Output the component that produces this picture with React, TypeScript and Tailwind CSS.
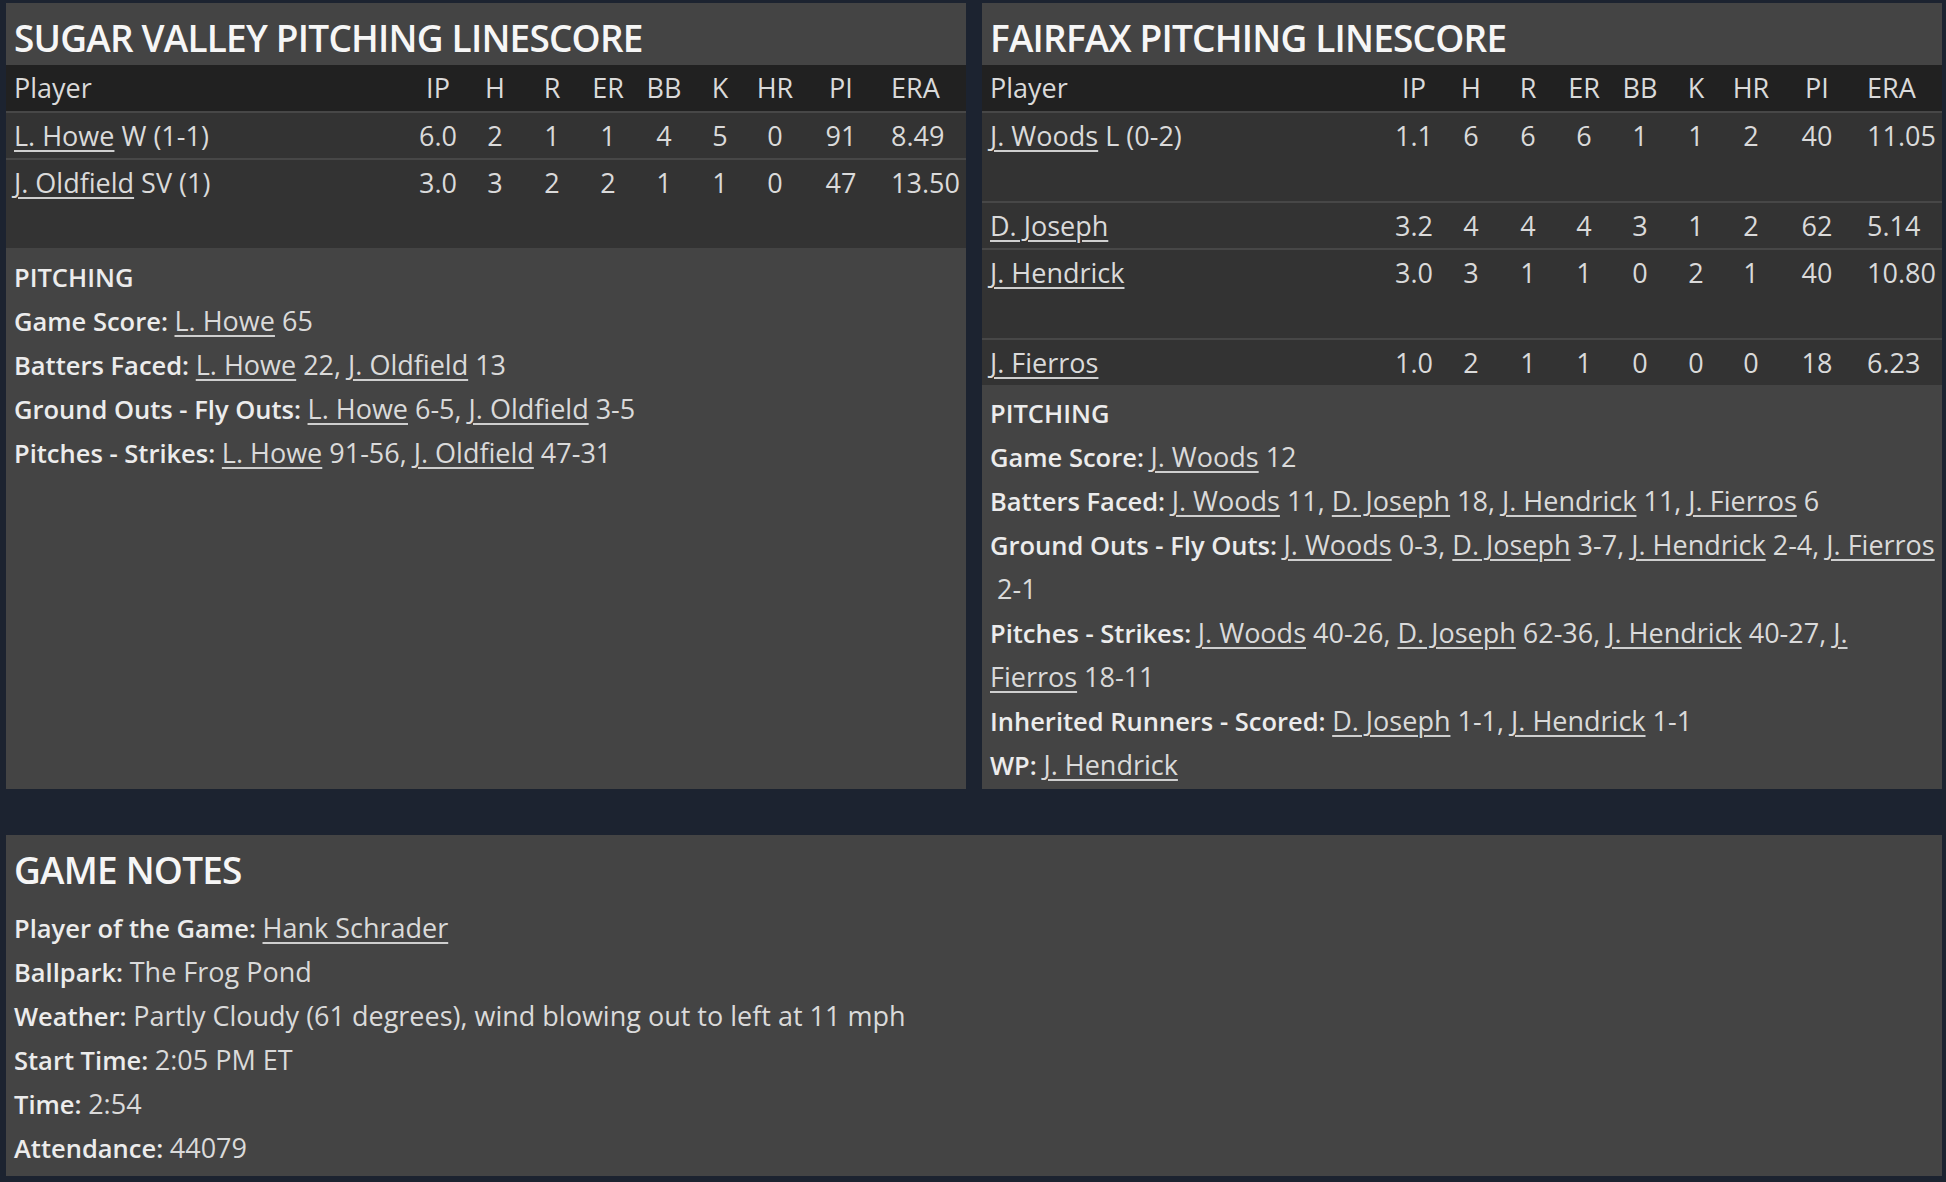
import React from "react";

type Row = {
  name: string;
  note?: string;
  stats: string[];
  tall?: boolean;
};

const cols = ["IP", "H", "R", "ER", "BB", "K", "HR", "PI", "ERA"];

const sugarValley: Row[] = [
  { name: "L. Howe", note: "W (1-1)", stats: ["6.0", "2", "1", "1", "4", "5", "0", "91", "8.49"] },
  { name: "J. Oldfield", note: "SV (1)", stats: ["3.0", "3", "2", "2", "1", "1", "0", "47", "13.50"], tall: true },
];

const fairfax: Row[] = [
  { name: "J. Woods", note: "L (0-2)", stats: ["1.1", "6", "6", "6", "1", "1", "2", "40", "11.05"], tall: true },
  { name: "D. Joseph", stats: ["3.2", "4", "4", "4", "3", "1", "2", "62", "5.14"] },
  { name: "J. Hendrick", stats: ["3.0", "3", "1", "1", "0", "2", "1", "40", "10.80"], tall: true },
  { name: "J. Fierros", stats: ["1.0", "2", "1", "1", "0", "0", "0", "18", "6.23"] },
];

const gridCols =
  "grid grid-cols-[404px_56px_58px_56px_56px_56px_56px_54px_78px_86px]";

const L = ({ children }: { children: React.ReactNode }) => (
  <span className="underline decoration-2 underline-offset-[4px] decoration-[#cfcfcf] cursor-pointer">
    {children}
  </span>
);

const Label = ({ children }: { children: React.ReactNode }) => (
  <span className="text-[25.5px] font-semibold text-[#ececec]">{children} </span>
);

const Title = ({ children }: { children: React.ReactNode }) => (
  <div className="h-[62px] px-2 pt-[8px] text-[37px] leading-[54px] font-semibold tracking-[-0.8px] text-[#f6f6f6] whitespace-nowrap">
    {children}
  </div>
);

const Table = ({ rows }: { rows: Row[] }) => (
  <div className="text-[27px] text-[#dadada]">
    <div className={`${gridCols} h-[46px] leading-[46px] bg-[#212121]`}>
      <div className="pl-2">Player</div>
      {cols.map((c) => (
        <div key={c} className={c === "ERA" ? "pl-[11px]" : "text-center"}>
          {c}
        </div>
      ))}
    </div>
    {rows.map((r) => (
      <div
        key={r.name}
        className={`${gridCols} border-t-2 border-[#474747] bg-[#333333] leading-[45px] ${
          r.tall ? "h-[90px]" : "h-[47px]"
        }`}
      >
        <div className="pl-2 whitespace-nowrap">
          <L>{r.name}</L>
          {r.note ? ` ${r.note}` : ""}
        </div>
        {r.stats.map((s, i) => (
          <div key={i} className={i === 8 ? "pl-[11px]" : "text-center"}>
            {s}
          </div>
        ))}
      </div>
    ))}
  </div>
);

const App = () => {
  return (
    <div className="min-h-screen bg-[#1c2330] pt-[3px] pl-[6px] pr-[4px] font-['Open_Sans','Noto_Sans',sans-serif]">
      <div className="grid grid-cols-2 gap-4">
        {/* Sugar Valley */}
        <div className="flex flex-col bg-[#444444]">
          <Title>SUGAR VALLEY PITCHING LINESCORE</Title>
          <Table rows={sugarValley} />
          <div className="flex-1 px-2 pt-[7px] text-[27px] leading-[44px] text-[#dadada]">
            <div className="text-[25.5px] font-semibold text-[#ececec]">PITCHING</div>
            <div>
              <Label>Game Score:</Label>
              <L>L. Howe</L> 65
            </div>
            <div>
              <Label>Batters Faced:</Label>
              <L>L. Howe</L> 22, <L>J. Oldfield</L> 13
            </div>
            <div>
              <Label>Ground Outs - Fly Outs:</Label>
              <L>L. Howe</L> 6-5, <L>J. Oldfield</L> 3-5
            </div>
            <div>
              <Label>Pitches - Strikes:</Label>
              <L>L. Howe</L> 91-56, <L>J. Oldfield</L> 47-31
            </div>
          </div>
        </div>

        {/* Fairfax */}
        <div className="flex flex-col bg-[#444444]">
          <Title>FAIRFAX PITCHING LINESCORE</Title>
          <Table rows={fairfax} />
          <div className="flex-1 px-2 pt-[6px] pb-[2px] text-[27px] leading-[44px] text-[#dadada] whitespace-nowrap">
            <div className="text-[25.5px] font-semibold text-[#ececec]">PITCHING</div>
            <div>
              <Label>Game Score:</Label>
              <L>J. Woods</L> 12
            </div>
            <div>
              <Label>Batters Faced:</Label>
              <L>J. Woods</L> 11, <L>D. Joseph</L> 18, <L>J. Hendrick</L> 11, <L>J. Fierros</L> 6
            </div>
            <div>
              <Label>Ground Outs - Fly Outs:</Label>
              <L>J. Woods</L> 0-3, <L>D. Joseph</L> 3-7, <L>J. Hendrick</L> 2-4, <L>J. Fierros</L>
              <br />
              {"\u00a02-1"}
            </div>
            <div>
              <Label>Pitches - Strikes:</Label>
              <L>J. Woods</L> 40-26, <L>D. Joseph</L> 62-36, <L>J. Hendrick</L> 40-27, <L>J.</L>
              <br />
              <L>Fierros</L> 18-11
            </div>
            <div>
              <Label>Inherited Runners - Scored:</Label>
              <L>D. Joseph</L> 1-1, <L>J. Hendrick</L> 1-1
            </div>
            <div>
              <Label>WP:</Label>
              <L>J. Hendrick</L>
            </div>
          </div>
        </div>
      </div>

      {/* Game notes */}
      <div className="mt-[46px] h-[341px] bg-[#444444]">
        <Title>GAME NOTES</Title>
        <div className="px-2 pt-[9px] text-[27px] leading-[44px] text-[#dadada]">
          <div>
            <Label>Player of the Game:</Label>
            <L>Hank Schrader</L>
          </div>
          <div>
            <Label>Ballpark:</Label>
            The Frog Pond
          </div>
          <div>
            <Label>Weather:</Label>
            Partly Cloudy (61 degrees), wind blowing out to left at 11 mph
          </div>
          <div>
            <Label>Start Time:</Label>
            2:05 PM ET
          </div>
          <div>
            <Label>Time:</Label>
            2:54
          </div>
          <div>
            <Label>Attendance:</Label>
            44079
          </div>
        </div>
      </div>
    </div>
  );
};

export default App;
